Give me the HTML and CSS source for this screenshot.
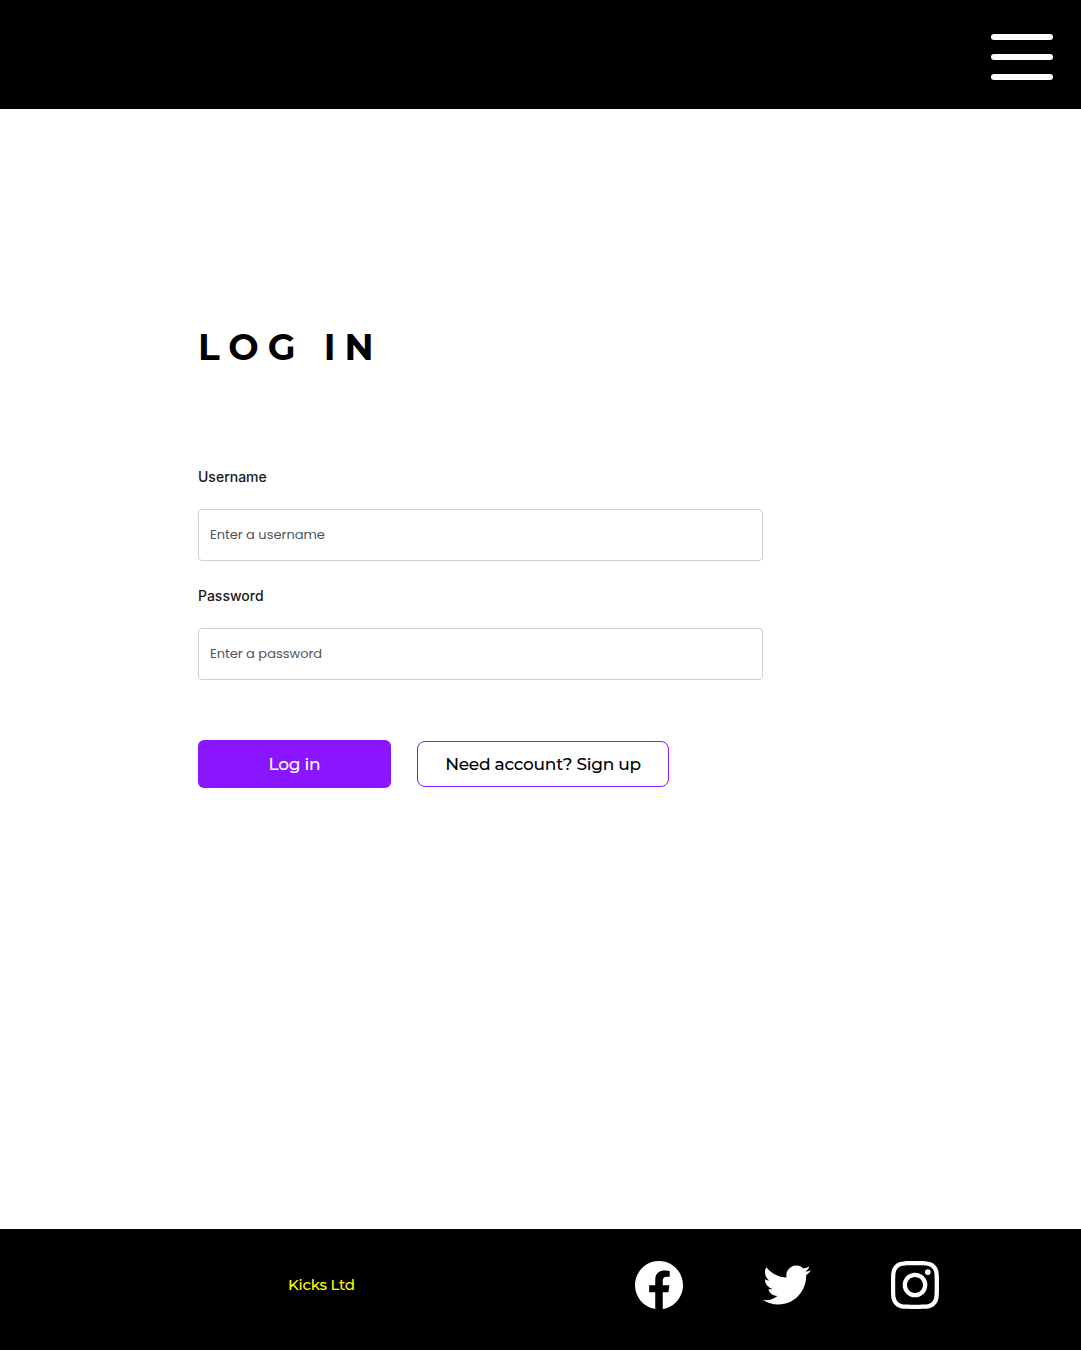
FILE: index.html
```html
<!DOCTYPE html>
<html lang="en">
<head>
  <meta charset="utf-8">
  <title>Log in</title>
  <link rel="stylesheet" href="styles.css">
</head>
<body>
  <header class="site-header">
    <button class="menu" type="button" aria-label="Menu">
      <span class="menu-bar"></span><span class="menu-bar"></span><span class="menu-bar"></span>
    </button>
  </header>
  <main class="content">
    <h1 class="title">LOG IN</h1>
    <form class="form">
      <div class="field">
        <label class="label" for="username">Username</label>
        <input class="input" id="username" type="text" placeholder="Enter a username">
      </div>
      <div class="field">
        <label class="label" for="password">Password</label>
        <input class="input" id="password" type="password" placeholder="Enter a password">
      </div>
      <div class="actions">
        <button class="button primary" type="button">Log in</button>
        <button class="button secondary" type="button">Need account? Sign up</button>
      </div>
    </form>
  </main>
  <footer class="site-footer">
    <span class="brand">Kicks Ltd</span>
    <nav class="social">
      <svg class="icon" viewBox="0 0 16 16" aria-label="Facebook"><path d="M16 8.049c0-4.446-3.582-8.05-8-8.05C3.58 0-.002 3.603-.002 8.05c0 4.017 2.926 7.347 6.75 7.951v-5.625h-2.03V8.05H6.75V6.275c0-2.017 1.195-3.131 3.022-3.131.876 0 1.791.157 1.791.157v1.98h-1.009c-.993 0-1.303.621-1.303 1.258v1.51h2.218l-.354 2.326H9.25V16c3.824-.604 6.75-3.934 6.75-7.951z"/></svg>
      <svg class="icon" viewBox="0 0 24 24" aria-label="Twitter"><path d="M23.953 4.57a10 10 0 01-2.825.775 4.958 4.958 0 002.163-2.723c-.951.555-2.005.959-3.127 1.184a4.92 4.92 0 00-8.384 4.482C7.69 8.095 4.067 6.13 1.64 3.162a4.822 4.822 0 00-.666 2.475c0 1.71.87 3.213 2.188 4.096a4.904 4.904 0 01-2.228-.616v.06a4.923 4.923 0 003.946 4.827 4.996 4.996 0 01-2.212.085 4.936 4.936 0 004.604 3.417 9.867 9.867 0 01-6.102 2.105c-.39 0-.779-.023-1.17-.067a13.995 13.995 0 007.557 2.209c9.053 0 13.998-7.496 13.998-13.985 0-.21 0-.42-.015-.63A9.935 9.935 0 0024 4.59z"/></svg>
      <svg class="icon" viewBox="0 0 24 24" aria-label="Instagram"><path d="M12 0C8.74 0 8.333.015 7.053.072 5.775.132 4.905.333 4.14.63c-.789.306-1.459.717-2.126 1.384S.935 3.35.63 4.14C.333 4.905.131 5.775.072 7.053.012 8.333 0 8.74 0 12s.015 3.667.072 4.947c.06 1.277.261 2.148.558 2.913.306.788.717 1.459 1.384 2.126.667.666 1.336 1.079 2.126 1.384.766.296 1.636.499 2.913.558C8.333 23.988 8.74 24 12 24s3.667-.015 4.947-.072c1.277-.06 2.148-.262 2.913-.558.788-.306 1.459-.718 2.126-1.384.666-.667 1.079-1.335 1.384-2.126.296-.765.499-1.636.558-2.913.06-1.28.072-1.687.072-4.947s-.015-3.667-.072-4.947c-.06-1.277-.262-2.149-.558-2.913-.306-.789-.718-1.459-1.384-2.126C21.319 1.347 20.651.935 19.86.63c-.765-.297-1.636-.499-2.913-.558C15.667.012 15.26 0 12 0zm0 2.16c3.203 0 3.585.016 4.85.071 1.17.055 1.805.249 2.227.415.562.217.96.477 1.382.896.419.42.679.819.896 1.381.164.422.36 1.057.413 2.227.057 1.266.07 1.646.07 4.85s-.015 3.585-.074 4.85c-.061 1.17-.256 1.805-.421 2.227-.224.562-.479.96-.899 1.382-.419.419-.824.679-1.38.896-.42.164-1.065.36-2.235.413-1.274.057-1.649.07-4.859.07-3.211 0-3.586-.015-4.859-.074-1.171-.061-1.816-.256-2.236-.421-.569-.224-.96-.479-1.379-.899-.421-.419-.69-.824-.9-1.38-.165-.42-.359-1.065-.42-2.235-.045-1.26-.061-1.649-.061-4.844 0-3.196.016-3.586.061-4.861.061-1.17.255-1.814.42-2.234.21-.57.479-.96.9-1.381.419-.419.81-.689 1.379-.898.42-.166 1.051-.361 2.221-.421 1.275-.045 1.65-.06 4.859-.06zm0 3.678a6.162 6.162 0 100 12.324 6.162 6.162 0 100-12.324zM12 16c-2.21 0-4-1.79-4-4s1.79-4 4-4 4 1.79 4 4-1.79 4-4 4zm7.846-10.405a1.441 1.441 0 01-2.88 0 1.44 1.44 0 012.88 0z"/></svg>
    </nav>
  </footer>
</body>
</html>
```
FILE: styles.css
```css
* { box-sizing: border-box; }
body {
  margin: 0;
  min-height: 1350px;
  display: flex;
  flex-direction: column;
  background: #fff;
  color: #000;
  font-family: Montserrat, Inter, sans-serif;
}
.site-header {
  height: 109px;
  padding: 34px 28px 0 0;
  display: flex;
  justify-content: flex-end;
  align-items: flex-start;
  background: #000;
}
.menu {
  width: 62px;
  padding: 0;
  border: 0;
  display: flex;
  flex-direction: column;
  gap: 14px;
  background: none;
}
.menu-bar {
  width: 62px;
  height: 6px;
  border-radius: 3px;
  background: #fff;
}
.content {
  flex: 1;
  padding: 216px 0 0 198px;
}
.title {
  margin: 0;
  font-size: 36px;
  line-height: 44px;
  font-weight: 700;
  letter-spacing: 9px;
}
.form {
  width: 565px;
  margin-top: 98px;
}
.field {
  height: 119px;
  display: flex;
  flex-direction: column;
  gap: 22px;
}
.label {
  font: 500 14px/20px Inter, sans-serif;
  color: #1a1a1a;
}
.input {
  width: 100%;
  height: 52px;
  padding: 0 11px;
  border: 1px solid #ced0d8;
  border-radius: 4px;
  background: #fff;
  font: 400 13px/20px Poppins, Inter, sans-serif;
}
.input::placeholder {
  color: #4d5460;
  opacity: 1;
}
.actions {
  margin-top: 35px;
  display: flex;
  align-items: center;
  gap: 26px;
}
.button {
  padding: 0;
  font: 500 17px/24px Montserrat, Inter, sans-serif;
  letter-spacing: -0.27px;
  white-space: nowrap;
}
.primary {
  width: 193px;
  height: 48px;
  border: 0;
  border-radius: 6px;
  background: #8a16ff;
  color: #fff;
}
.secondary {
  width: 252px;
  height: 46px;
  border: 1px solid #8a16ff;
  border-radius: 8px;
  background: #fff;
  color: #000;
}
.site-footer {
  height: 121px;
  padding: 0 142px 9px 288px;
  display: flex;
  align-items: center;
  justify-content: space-between;
  background: #000;
}
.brand {
  color: #ff0;
  font-size: 15px;
  font-weight: 500;
  line-height: 20px;
  letter-spacing: -0.25px;
}
.social {
  display: flex;
  gap: 80px;
}
.icon {
  width: 48px;
  height: 48px;
  fill: #fff;
}
```
